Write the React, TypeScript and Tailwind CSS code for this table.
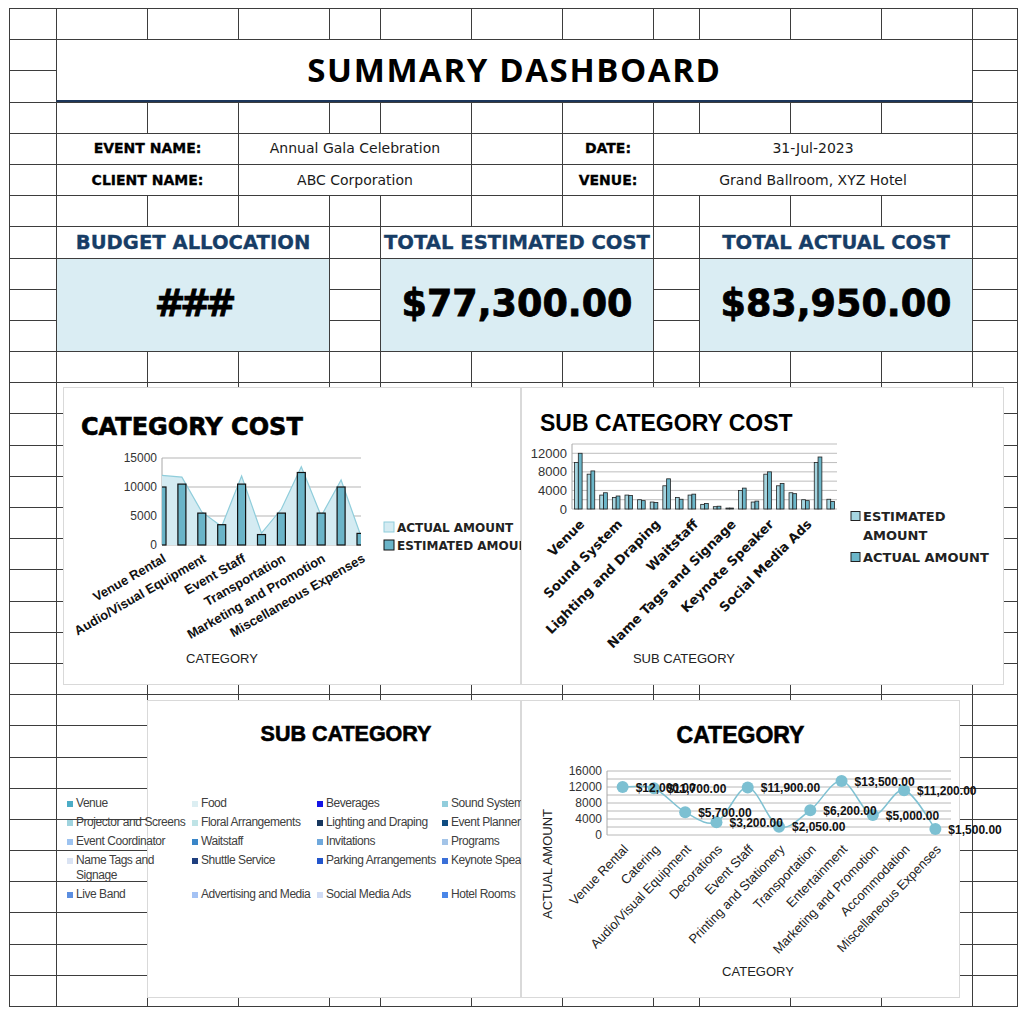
import React from "react";

type Kids = { className?: string; children?: React.ReactNode };

// column widths of the sheet (A..M)
const COLS =
  "grid-cols-[47px_91px_91px_91px_51px_91px_91px_91px_46px_91px_91px_91px_45px]";
const ROWS = "grid-rows-[repeat(32,minmax(0,1fr))]";

const categories = [
  "Venue Rental",
  "Catering",
  "Audio/Visual Equipment",
  "Decorations",
  "Event Staff",
  "Printing and Stationery",
  "Transportation",
  "Entertainment",
  "Marketing and Promotion",
  "Accommodation",
  "Miscellaneous Expenses",
];
const estimated = [10000, 10500, 5500, 3500, 10500, 1800, 5500, 12500, 5500, 10000, 2000];
const actual = [12000, 11700, 5700, 3200, 11900, 2050, 6200, 13500, 5000, 11200, 1500];

const subEstimated = [
  10000, 7500, 3000, 2500, 3000, 2000, 1500, 5000, 2500, 3000, 1000, 500, 200, 4000, 1500, 7500,
  5000, 3500, 2000, 10000, 2100,
];
const subActual = [
  12000, 8200, 3500, 2800, 2900, 1800, 1400, 6500, 2100, 3200, 1200, 600, 200, 4500, 1700, 8000,
  5500, 3300, 1800, 11200, 1600,
];
const subLabels: Record<number, string> = {
  0: "Venue",
  3: "Sound System",
  6: "Lighting and Draping",
  9: "Waitstaff",
  12: "Name Tags and Signage",
  15: "Keynote Speaker",
  18: "Social Media Ads",
};

const subLegend = [
  { name: "Venue", color: "#4bacc6" },
  { name: "Food", color: "#dceef2" },
  { name: "Beverages", color: "#1414e6" },
  { name: "Sound System", color: "#92cddc" },
  { name: "Projector and Screens", color: "#9fd3de" },
  { name: "Floral Arrangements", color: "#bfe3e6" },
  { name: "Lighting and Draping", color: "#17375e" },
  { name: "Event Planner", color: "#0f4c81" },
  { name: "Event Coordinator", color: "#9dc3f0" },
  { name: "Waitstaff", color: "#3a86c8" },
  { name: "Invitations", color: "#6fa8dc" },
  { name: "Programs", color: "#a3c4e8" },
  { name: "Name Tags and Signage", color: "#dae3f3" },
  { name: "Shuttle Service", color: "#1f3f7f" },
  { name: "Parking Arrangements", color: "#2255cc" },
  { name: "Keynote Speaker", color: "#3a6fd8" },
  { name: "Live Band", color: "#5b8ee0" },
  { name: "Advertising and Media", color: "#a4c2f4" },
  { name: "Social Media Ads", color: "#d0dcf5" },
  { name: "Hotel Rooms", color: "#4a86e8" },
];

const SANS = "'Liberation Sans', Arial, sans-serif";
const HEAVY = "'DejaVu Sans', Verdana, sans-serif";

const money = (v: number) => `$${v.toLocaleString("en-US")}.00`;

function smooth(pts: [number, number][]) {
  let d = `M${pts[0][0]},${pts[0][1]}`;
  for (let i = 0; i < pts.length - 1; i++) {
    const p0 = pts[i - 1] ?? pts[i];
    const p1 = pts[i];
    const p2 = pts[i + 1];
    const p3 = pts[i + 2] ?? p2;
    const c1x = p1[0] + (p2[0] - p0[0]) / 6;
    const c1y = p1[1] + (p2[1] - p0[1]) / 6;
    const c2x = p2[0] - (p3[0] - p1[0]) / 6;
    const c2y = p2[1] - (p3[1] - p1[1]) / 6;
    d += ` C${c1x},${c1y} ${c2x},${c2y} ${p2[0]},${p2[1]}`;
  }
  return d;
}

const Cell = ({ className = "", children }: Kids) => (
  <div className={`border-l border-t border-[#3d3d3d] ${className}`}>{children}</div>
);

const plain = (row: number) =>
  Array.from({ length: 13 }, (_, i) => <Cell key={`r${row}c${i}`} />);

const InfoRow = ({
  row,
  label,
  value,
  label2,
  value2,
}: {
  row: number;
  label: string;
  value: string;
  label2: string;
  value2: string;
}) => (
  <>
    <Cell key={`i${row}a`} />
    <Cell className="col-span-2 flex items-center justify-center font-['DejaVu_Sans'] font-bold text-[14px] text-black [-webkit-text-stroke:0.3px_black]">
      {label}
    </Cell>
    <Cell className="col-span-3 flex items-center justify-center font-['DejaVu_Sans'] text-[14px] text-[#1a1a1a]">
      {value}
    </Cell>
    <Cell />
    <Cell className="flex items-center justify-center font-['DejaVu_Sans'] font-bold text-[14px] text-black [-webkit-text-stroke:0.3px_black]">
      {label2}
    </Cell>
    <Cell className="col-span-4 flex items-center justify-center font-['DejaVu_Sans'] text-[14px] text-[#1a1a1a]">
      {value2}
    </Cell>
    <Cell />
  </>
);

const CardHead = ({ children }: Kids) => (
  <Cell className="col-span-3 flex items-center justify-center font-['DejaVu_Sans'] font-bold text-[19.6px] text-[#173d66] [-webkit-text-stroke:0.3px_#173d66] whitespace-nowrap">
    {children}
  </Cell>
);

const CardValue = ({ className = "", children }: Kids) => (
  <Cell
    className={`col-span-3 row-span-3 bg-[#daedf3] flex items-center justify-center font-['DejaVu_Sans'] font-bold text-[36.5px] text-black [-webkit-text-stroke:0.8px_black] ${className}`}
  >
    {children}
  </Cell>
);

function Sheet() {
  return (
    <div
      className={`col-start-1 row-start-1 grid ${COLS} ${ROWS} h-[999px] w-[1009px] border-r border-b border-[#3d3d3d]`}
    >
      {plain(0)}
      <Cell key="a1" />
      <Cell className="col-span-11 row-span-2 flex items-center justify-center border-b-2 border-b-[#1c365a] font-['Open_Sans'] font-bold text-[33px] tracking-[1.6px] text-black">
        SUMMARY DASHBOARD
      </Cell>
      <Cell key="m1" />
      <Cell key="a2" />
      <Cell key="m2" />
      {plain(3)}
      <InfoRow
        row={4}
        label="EVENT NAME:"
        value="Annual Gala Celebration"
        label2="DATE:"
        value2="31-Jul-2023"
      />
      <InfoRow
        row={5}
        label="CLIENT NAME:"
        value="ABC Corporation"
        label2="VENUE:"
        value2="Grand Ballroom, XYZ Hotel"
      />
      {plain(6)}
      <Cell />
      <CardHead>BUDGET ALLOCATION</CardHead>
      <Cell />
      <CardHead>TOTAL ESTIMATED COST</CardHead>
      <Cell />
      <CardHead>TOTAL ACTUAL COST</CardHead>
      <Cell />
      <Cell />
      <CardValue className="tracking-[-5px]">###</CardValue>
      <Cell />
      <CardValue>$77,300.00</CardValue>
      <Cell />
      <CardValue>$83,950.00</CardValue>
      <Cell />
      {[9, 10].map((r) => (
        <React.Fragment key={`side${r}`}>
          <Cell />
          <Cell />
          <Cell />
          <Cell />
        </React.Fragment>
      ))}
      {Array.from({ length: 21 }, (_, k) => (
        <React.Fragment key={`row${k + 11}`}>{plain(k + 11)}</React.Fragment>
      ))}
    </div>
  );
}

const Panel = ({ className = "", children }: Kids) => (
  <div
    className={`self-start justify-self-start h-[298px] bg-white border border-[#d9d9d9] flex flex-col ${className}`}
  >
    {children}
  </div>
);

function CategoryCost() {
  const x = (i: number) => 99 + i * 19.9;
  const y = (v: number) => 158 - (v / 15000) * 87;
  const top = actual.map((v, i) => `${x(i)},${y(v)}`).join(" ");
  return (
    <Panel className="col-start-2 col-span-6 row-start-13 row-span-10 ml-[7px] mt-[5px] w-[458px]">
      <div className="h-[59px] pl-[17px] pt-[27px] leading-none font-['DejaVu_Sans'] font-bold text-[24px] text-black [-webkit-text-stroke:0.6px_black]">
        CATEGORY COST
      </div>
      <svg width={456} height={237} viewBox="1 60 456 237" className="overflow-visible">
        <defs>
          <clipPath id="plot1">
            <rect x={99} y={60} width={199} height={99} />
          </clipPath>
        </defs>
        {[0, 5000, 10000, 15000].map((v) => (
          <g key={v}>
            <line x1={99} x2={298} y1={y(v)} y2={y(v)} stroke="#b5b5b5" />
            <text x={94} y={y(v) + 4} textAnchor="end" fontSize={12} fontFamily={SANS} fill="#333">
              {v}
            </text>
          </g>
        ))}
        <line x1={99} x2={99} y1={71} y2={158} stroke="#a8a8a8" />
        <g clipPath="url(#plot1)">
          <polygon points={`99,158 ${top} 298,158`} fill="#d4ebf2" />
          <polyline points={top} fill="none" stroke="#8fcddb" strokeWidth={1.2} />
          {estimated.map((v, i) => (
            <rect
              key={i}
              x={x(i) - 4}
              y={y(v)}
              width={8}
              height={158 - y(v)}
              fill="#6ab4c8"
              stroke="#111"
              strokeWidth={1.2}
            />
          ))}
        </g>
        {categories.map((c, i) =>
          i % 2 === 0 ? (
            <text
              key={c}
              x={x(i) + 5}
              y={174}
              transform={`rotate(-30 ${x(i) + 5} 174)`}
              textAnchor="end"
              fontSize={13}
              fontWeight="bold"
              fontFamily={SANS}
              fill="#111"
            >
              {c}
            </text>
          ) : null,
        )}
        <text x={159} y={276} textAnchor="middle" fontSize={13} fontFamily={SANS} fill="#222">
          CATEGORY
        </text>
        <rect x={321} y={135} width={10} height={10} fill="#d4ebf2" stroke="#8fcddb" />
        <text x={334} y={144.5} fontSize={12} fontWeight="bold" fontFamily={HEAVY} fill="#222">
          ACTUAL AMOUNT
        </text>
        <rect x={321} y={153} width={10} height={10} fill="#6ab4c8" stroke="#111" />
        <text x={334} y={162.5} fontSize={12} fontWeight="bold" fontFamily={HEAVY} fill="#222">
          ESTIMATED AMOUNT
        </text>
      </svg>
    </Panel>
  );
}

function SubCategoryCost() {
  const step = 265 / 21;
  const x = (i: number) => 51 + (i + 0.5) * step;
  const y = (v: number) => 122 - (v / 14000) * 65;
  return (
    <Panel className="col-start-7 col-span-7 row-start-13 row-span-10 ml-[50px] mt-[5px] w-[483px]">
      <div className="h-[59px] pl-[18px] pt-[24px] leading-none font-['Liberation_Sans'] font-bold text-[23px] text-black">
        SUB CATEGORY COST
      </div>
      <svg width={481} height={237} viewBox="1 60 481 237" className="overflow-visible">
        {[0, 2000, 4000, 6000, 8000, 10000, 12000, 14000].map((v) => (
          <line key={v} x1={51} x2={316} y1={y(v)} y2={y(v)} stroke="#bdbdbd" />
        ))}
        {[0, 4000, 8000, 12000].map((v) => (
          <text key={v} x={46} y={y(v) + 4.5} textAnchor="end" fontSize={13} fontFamily={SANS} fill="#333">
            {v}
          </text>
        ))}
        <line x1={51} x2={51} y1={57} y2={122} stroke="#a8a8a8" />
        {subEstimated.map((v, i) => (
          <g key={i}>
            <rect
              x={x(i) - 3.8}
              y={y(v)}
              width={3.8}
              height={122 - y(v)}
              fill="#a6d6e1"
              stroke="#222"
              strokeWidth={0.8}
            />
            <rect
              x={x(i)}
              y={y(subActual[i])}
              width={3.8}
              height={122 - y(subActual[i])}
              fill="#6bb6c9"
              stroke="#222"
              strokeWidth={0.8}
            />
          </g>
        ))}
        {Object.entries(subLabels).map(([k, label]) => {
          const px = x(Number(k)) + 7;
          return (
            <text
              key={k}
              x={px}
              y={138}
              transform={`rotate(-45 ${px} 138)`}
              textAnchor="end"
              fontSize={13}
              fontWeight="bold"
              fontFamily={HEAVY}
              fill="#111"
            >
              {label}
            </text>
          );
        })}
        <text x={163} y={276} textAnchor="middle" fontSize={13} fontFamily={SANS} fill="#222">
          SUB CATEGORY
        </text>
        <rect x={330} y={124.5} width={9} height={9} fill="#a6d6e1" stroke="#222" />
        <text x={342} y={133.7} fontSize={13} fontWeight="bold" fontFamily={HEAVY} fill="#222">
          ESTIMATED
        </text>
        <text x={342} y={152.7} fontSize={13} fontWeight="bold" fontFamily={HEAVY} fill="#222">
          AMOUNT
        </text>
        <rect x={330} y={165.5} width={9} height={9} fill="#6bb6c9" stroke="#222" />
        <text x={342} y={174.7} fontSize={13} fontWeight="bold" fontFamily={HEAVY} fill="#222">
          ACTUAL AMOUNT
        </text>
      </svg>
    </Panel>
  );
}

function SubCategory() {
  return (
    <Panel className="col-start-3 col-span-4 row-start-23 row-span-10 mt-[6px] w-[374px]">
      <div className="h-[59px] pl-[24px] pt-[23px] text-center leading-none font-['Liberation_Sans'] font-bold text-[21.5px] text-black [-webkit-text-stroke:0.6px_black]">
        SUB CATEGORY
      </div>
      <div className="-ml-[81px] mt-[36px] grid grid-cols-[125px_125px_125px_125px] gap-y-[4px] font-['Liberation_Sans'] text-[12px] tracking-[-0.45px] leading-[15px] text-[#404040]">
        {subLegend.map((s) => (
          <div key={s.name} className="flex items-start gap-[3px]">
            <span
              className="mt-[4.5px] h-[6px] w-[6px] shrink-0"
              style={{ backgroundColor: s.color }}
            />
            <span className="w-[114px]">{s.name}</span>
          </div>
        ))}
      </div>
    </Panel>
  );
}

function CategoryLine() {
  const x = (i: number) => 86 + (i + 0.5) * (344 / 11);
  const y = (v: number) => 135 - v * 0.004;
  const pts = actual.map((v, i) => [x(i), y(v)] as [number, number]);
  return (
    <Panel className="col-start-7 col-span-6 row-start-23 row-span-10 ml-[50px] mt-[6px] w-[439px]">
      <div className="h-[59px] pt-[23px] text-center leading-none font-['Liberation_Sans'] font-bold text-[23px] text-black [-webkit-text-stroke:0.6px_black]">
        CATEGORY
      </div>
      <svg width={437} height={237} viewBox="1 60 437 237" className="overflow-visible">
        {[0, 2000, 4000, 6000, 8000, 10000, 12000, 14000, 16000].map((v) => (
          <line key={v} x1={86} x2={430} y1={y(v)} y2={y(v)} stroke="#b8b8b8" />
        ))}
        {[0, 4000, 8000, 12000, 16000].map((v) => (
          <text key={v} x={81} y={y(v) + 4} textAnchor="end" fontSize={12} fontFamily={SANS} fill="#333">
            {v}
          </text>
        ))}
        <line x1={86} x2={86} y1={71} y2={135} stroke="#a8a8a8" />
        <path d={smooth(pts)} fill="none" stroke="#7fc1d2" strokeWidth={1.5} />
        {pts.map(([px, py], i) => (
          <circle key={i} cx={px} cy={py} r={6} fill="#7cc0d2" />
        ))}
        {pts.map(([px, py], i) => (
          <text
            key={`l${i}`}
            x={px + 13}
            y={py + 4.5}
            fontSize={12}
            fontWeight="bold"
            fontFamily={SANS}
            fill="#111"
          >
            {money(actual[i])}
          </text>
        ))}
        {categories.map((c, i) => {
          const px = x(i) + 6.5;
          return (
            <text
              key={c}
              x={px}
              y={150}
              transform={`rotate(-46 ${px} 150)`}
              textAnchor="end"
              fontSize={13}
              fontFamily={SANS}
              fill="#222"
            >
              {c}
            </text>
          );
        })}
        <text
          x={31}
          y={164}
          transform="rotate(-90 31 164)"
          textAnchor="middle"
          fontSize={13}
          fontFamily={SANS}
          fill="#222"
        >
          ACTUAL AMOUNT
        </text>
        <text x={237} y={276} textAnchor="middle" fontSize={13} fontFamily={SANS} fill="#222">
          CATEGORY
        </text>
      </svg>
    </Panel>
  );
}

export default function App() {
  return (
    <div className="min-h-[1015px] w-[1027px] bg-white pl-[9px] pt-[8px]">
      <div className="grid">
        <Sheet />
        <div className={`col-start-1 row-start-1 grid ${COLS} ${ROWS} h-[998px]`}>
          <CategoryCost />
          <SubCategoryCost />
          <SubCategory />
          <CategoryLine />
        </div>
      </div>
    </div>
  );
}
